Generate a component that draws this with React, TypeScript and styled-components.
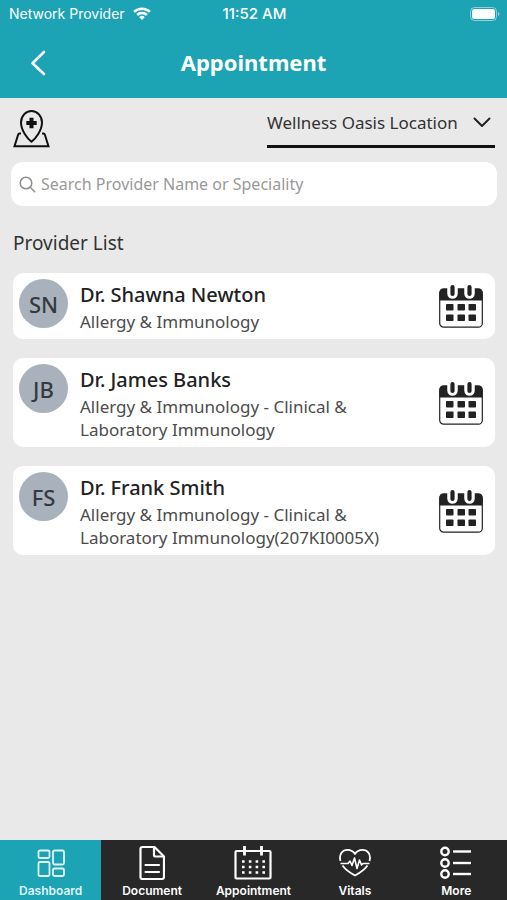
import React, { useState } from "react";
import styled, { createGlobalStyle } from "styled-components";

const GlobalStyle = createGlobalStyle`
  * {
    box-sizing: border-box;
  }

  body {
    margin: 0;
    background-color: #e9e9e9;
    color: #333;
    font-family: "Noto Sans", "Open Sans", sans-serif;
  }

  svg {
    display: block;
    flex-shrink: 0;
  }
`;

const Screen = styled.div`
  display: flex;
  flex-direction: column;
  min-height: 100vh;
`;

const Header = styled.header`
  background-color: #1ca3b4;
  color: white;
`;

const StatusBar = styled.div`
  display: grid;
  grid-template-columns: 1fr auto 1fr;
  align-items: center;
  height: 27px;
  padding: 0 7px 0 9px;
  font-family: Inter, sans-serif;
  font-size: 14px;
`;

const Carrier = styled.span`
  display: flex;
  align-items: center;
  gap: 8px;
`;

const Clock = styled.time`
  font-size: 15px;
  font-weight: 500;
`;

const Battery = styled.span`
  justify-self: end;
`;

const TitleBar = styled.div`
  display: grid;
  grid-template-columns: 44px 1fr 44px;
  align-items: center;
  height: 71px;
  padding: 0 16px;
`;

const BackButton = styled.button`
  display: flex;
  align-items: center;
  justify-content: center;
  height: 44px;
  padding: 0;
  border: none;
  background: none;
  color: white;
  cursor: pointer;
`;

const Title = styled.h1`
  margin: 0;
  padding-bottom: 2px;
  font-size: 22px;
  font-weight: 700;
  line-height: 30px;
  text-align: center;
`;

const Content = styled.main`
  flex: 1;
  padding: 8px 12px 20px 13px;
`;

const LocationRow = styled.div`
  display: flex;
  align-items: flex-start;
  justify-content: space-between;
`;

const MapButton = styled.button`
  margin-top: 4px;
  padding: 0;
  border: none;
  background: none;
  color: #111;
  cursor: pointer;
`;

const SelectWrapper = styled.div`
  display: grid;
  grid-template-columns: 1fr 22px;
  align-items: center;
  border-bottom: 3px solid #111;

  svg {
    grid-area: 1 / 2;
    margin-bottom: 7px;
    pointer-events: none;
  }
`;

const LocationSelect = styled.select`
  grid-area: 1 / 1 / 2 / 3;
  height: 39px;
  padding: 0 37px 7px 0;
  border: none;
  background: none;
  color: #333;
  font-family: inherit;
  font-size: 17px;
  appearance: none;
  cursor: pointer;
`;

const SearchBox = styled.label`
  display: flex;
  align-items: center;
  gap: 5px;
  height: 44px;
  margin: 14px -2px 0;
  padding: 0 8px;
  border-radius: 12px;
  background-color: white;
  color: #8e8e8e;
`;

const SearchInput = styled.input`
  flex: 1;
  min-width: 0;
  padding: 0;
  border: none;
  outline: none;
  color: #333;
  font-family: inherit;
  font-size: 16px;

  &::placeholder {
    color: #999;
    opacity: 1;
  }
`;

const ListTitle = styled.h2`
  margin: 23px 0 15px;
  font-size: 19px;
  font-weight: 400;
  line-height: 29px;
`;

const ProviderList = styled.ul`
  display: grid;
  gap: 19px;
  margin: 0;
  padding: 0;
  list-style: none;
`;

const ProviderCard = styled.li`
  display: flex;
  align-items: flex-start;
  gap: 12px;
  padding: 6px 12px 6px 6px;
  border-radius: 10px;
  background-color: white;
`;

const Avatar = styled.span`
  display: flex;
  align-items: center;
  justify-content: center;
  flex-shrink: 0;
  width: 49px;
  height: 49px;
  border-radius: 50%;
  background-color: #a9b2bc;
  color: #343a40;
  font-size: 22px;
  font-weight: 500;
`;

const ProviderInfo = styled.div`
  flex: 1;
  padding-top: 3px;
`;

const ProviderName = styled.h3`
  margin: 0 0 2px;
  color: #222;
  font-size: 20px;
  font-weight: 500;
  line-height: 26px;
`;

const Speciality = styled.p`
  max-width: 310px;
  margin: 0;
  color: #4c4c4c;
  font-size: 17px;
  line-height: 23px;
`;

const BookButton = styled.button`
  align-self: center;
  padding: 0;
  border: none;
  background: none;
  color: #222;
  cursor: pointer;
`;

const TabBar = styled.nav`
  display: grid;
  grid-template-columns: repeat(5, 1fr);
  height: 60px;
  background-color: #282828;
`;

const Tab = styled.a<{ $active?: boolean }>`
  display: flex;
  flex-direction: column;
  align-items: center;
  justify-content: flex-end;
  gap: 1px;
  background-color: ${(props) => (props.$active ? "#1ca3b4" : "transparent")};
  color: ${(props) => (props.$active ? "#dff6fa" : "white")};
  font-family: Inter, sans-serif;
  font-size: 12px;
  font-weight: 600;
  line-height: 18px;
  text-decoration: none;
`;

const WifiIcon = () => (
  <svg width="18" height="14" viewBox="0 0 20 15" fill="none" stroke="currentColor" strokeWidth="2.8">
    <path d="M1.2 5.2a12.5 12.5 0 0 1 17.6 0" />
    <path d="M4.6 8.6a7.6 7.6 0 0 1 10.8 0" />
    <path d="M10 14.2 6.9 11.1a4.4 4.4 0 0 1 6.2 0Z" fill="currentColor" stroke="none" />
  </svg>
);

const BatteryIcon = () => (
  <svg width="30" height="14" viewBox="0 0 30 14">
    <rect x="0.5" y="0.5" width="26" height="13" rx="4" fill="none" stroke="white" opacity="0.5" />
    <rect x="2" y="2" width="23" height="10" rx="2.5" fill="white" />
    <path d="M28 5v4q1.5-.6 1.5-2T28 5Z" fill="white" opacity="0.5" />
  </svg>
);

const BackIcon = () => (
  <svg width="16" height="26" viewBox="0 0 16 26" fill="none" stroke="currentColor" strokeWidth="2.6" strokeLinecap="round">
    <path d="M14 2 2.5 13.2 14 24" strokeLinejoin="round" />
  </svg>
);

const MapPinIcon = () => (
  <svg width="37" height="38" viewBox="0 0 37 38" fill="none" stroke="currentColor" strokeWidth="2">
    <path d="M18.5 31.8C14.5 28.5 8 20.5 8 12.5A10.5 11.5 0 0 1 29 12.5C29 20.5 22.5 28.5 18.5 31.8Z" />
    <path d="M18.5 7.8v10.4M13.3 13h10.4" strokeWidth="4" />
    <path d="M8 23.5H6.5q-1 0-1.3 1L1.5 36.3H35.5L31.8 24.5q-.3-1-1.3-1H29" />
  </svg>
);

const ChevronIcon = () => (
  <svg width="18" height="11" viewBox="0 0 18 11" fill="none" stroke="#222" strokeWidth="2" strokeLinecap="round">
    <path d="m1.5 1.5 7.5 7.5 7.5-7.5" strokeLinejoin="round" />
  </svg>
);

const SearchIcon = () => (
  <svg width="17" height="17" viewBox="0 0 17 17" fill="none" stroke="currentColor" strokeWidth="1.5">
    <circle cx="7" cy="7" r="5.8" />
    <path d="m11.2 11.2 5 5" />
  </svg>
);

const BookIcon = () => (
  <svg width="44" height="44" viewBox="0 0 44 44">
    <rect x="0.7" y="5.2" width="42.6" height="38" rx="4" fill="white" stroke="currentColor" strokeWidth="1.2" />
    <path d="M0.5 16.5V8.5a4 4 0 0 1 4-4h35a4 4 0 0 1 4 4v8Z" fill="currentColor" />
    {[13.5, 30.5].map((x) => (
      <g key={x} strokeLinecap="round">
        <path d={`M${x} 3v6.5`} stroke="white" strokeWidth="10.5" />
        <path d={`M${x} 3v7`} stroke="currentColor" strokeWidth="4.2" />
      </g>
    ))}
    {[20, 30.5].map((y) =>
      [7, 18.5, 29.5].map((x) => (
        <rect key={`${x}-${y}`} x={x} y={y} width="7.5" height="6.5" rx="0.8" fill="currentColor" />
      ))
    )}
  </svg>
);

const DashboardIcon = () => (
  <svg width="28" height="38" viewBox="0 0 28 38" fill="none" stroke="currentColor" strokeWidth="1.8">
    <rect x="1.5" y="7.5" width="11" height="7.5" rx="1.5" />
    <rect x="1.5" y="19" width="11" height="14" rx="1.5" />
    <rect x="16" y="7.5" width="11" height="14" rx="1.5" />
    <rect x="16" y="25.5" width="11" height="7.5" rx="1.5" />
  </svg>
);

const DocumentIcon = () => (
  <svg width="26" height="38" viewBox="0 0 26 38" fill="none" stroke="currentColor" strokeWidth="2.2" strokeLinejoin="round">
    <path d="M3.5 4h12L25 13.5V34q0 2-2 2H3.5q-2 0-2-2V6q0-2 2-2Z" />
    <path d="M15 4v8q0 1.5 1.5 1.5H25" />
    <path d="M6.500 22H20M6.500 29H20" strokeLinecap="round" />
  </svg>
);

const CalendarIcon = () => (
  <svg width="38" height="38" viewBox="0 0 38 38" fill="none" stroke="currentColor" strokeWidth="2.2">
    <rect x="1.5" y="8" width="35" height="27.5" rx="1" />
    <path d="M10.5 3v9.5M27.5 3v9.5" strokeWidth="2.8" />
    <path d="M8 18.5h24M8 24h24M8 29.5h24" strokeWidth="2.6" strokeDasharray="2.6 4.2" />
  </svg>
);

const VitalsIcon = () => (
  <svg width="32" height="38" viewBox="0 0 32 38" fill="none" stroke="currentColor" strokeWidth="1.8" strokeLinejoin="round">
    <path d="M1.5 18C-.5 10.5 4 6.8 8.5 6.8q5 0 7.500 4.200 2.500-4.200 7.500-4.200c4.500 0 9 3.700 7 11.200" />
    <path d="M3.5 22.5Q7.5 28 16 32.5q8.500-4.500 12.500-10" />
    <path d="M1.5 20.500H9l2-2.500 2 4.500 2.500-7.500 2.500 10.500 2.500-8.500 2 5 1.500-1.500h6.500" strokeWidth="1.6" />
  </svg>
);

const MoreIcon = () => (
  <svg width="32" height="38" viewBox="0 0 32 38" fill="none" stroke="currentColor" strokeWidth="2.4">
    {[8.5, 20, 31].map((y) => (
      <g key={y}>
        <circle cx="5" cy={y} r="3.7" />
        <path d={`M13 ${y}h18`} />
      </g>
    ))}
  </svg>
);

interface Provider {
  initials: string;
  name: string;
  speciality: string;
}

const providers: Provider[] = [
  {
    initials: "SN",
    name: "Dr. Shawna Newton",
    speciality: "Allergy & Immunology",
  },
  {
    initials: "JB",
    name: "Dr. James Banks",
    speciality: "Allergy & Immunology - Clinical & Laboratory Immunology",
  },
  {
    initials: "FS",
    name: "Dr. Frank Smith",
    speciality: "Allergy & Immunology - Clinical & Laboratory Immunology(207KI0005X)",
  },
];

const tabs = [
  { label: "Dashboard", icon: <DashboardIcon /> },
  { label: "Document", icon: <DocumentIcon /> },
  { label: "Appointment", icon: <CalendarIcon /> },
  { label: "Vitals", icon: <VitalsIcon /> },
  { label: "More", icon: <MoreIcon /> },
];

const App: React.FC = () => {
  const [search, setSearch] = useState("");

  const visible = providers.filter((provider) =>
    `${provider.name} ${provider.speciality}`
      .toLowerCase()
      .includes(search.toLowerCase())
  );

  return (
    <Screen>
      <GlobalStyle />
      <Header>
        <StatusBar>
          <Carrier>
            Network Provider <WifiIcon />
          </Carrier>
          <Clock>11:52 AM</Clock>
          <Battery>
            <BatteryIcon />
          </Battery>
        </StatusBar>
        <TitleBar>
          <BackButton aria-label="Back">
            <BackIcon />
          </BackButton>
          <Title>Appointment</Title>
        </TitleBar>
      </Header>
      <Content>
        <LocationRow>
          <MapButton aria-label="Show map">
            <MapPinIcon />
          </MapButton>
          <SelectWrapper>
            <LocationSelect aria-label="Location">
              <option>Wellness Oasis Location</option>
            </LocationSelect>
            <ChevronIcon />
          </SelectWrapper>
        </LocationRow>
        <SearchBox>
          <SearchIcon />
          <SearchInput
            aria-label="Search providers"
            placeholder="Search Provider Name or Speciality"
            value={search}
            onChange={(e) => setSearch(e.target.value)}
          />
        </SearchBox>
        <ListTitle>Provider List</ListTitle>
        <ProviderList>
          {visible.map((provider) => (
            <ProviderRow key={provider.initials} {...provider} />
          ))}
        </ProviderList>
      </Content>
      <TabBar>
        {tabs.map((tab, i) => (
          <Tab key={tab.label} href="#" $active={i === 0}>
            {tab.icon}
            {tab.label}
          </Tab>
        ))}
      </TabBar>
    </Screen>
  );
};

const ProviderRow: React.FC<Provider> = (props) => {
  return (
    <ProviderCard>
      <Avatar>{props.initials}</Avatar>
      <ProviderInfo>
        <ProviderName>{props.name}</ProviderName>
        <Speciality>{props.speciality}</Speciality>
      </ProviderInfo>
      <BookButton aria-label={`Book ${props.name}`}>
        <BookIcon />
      </BookButton>
    </ProviderCard>
  );
};

export default App;
